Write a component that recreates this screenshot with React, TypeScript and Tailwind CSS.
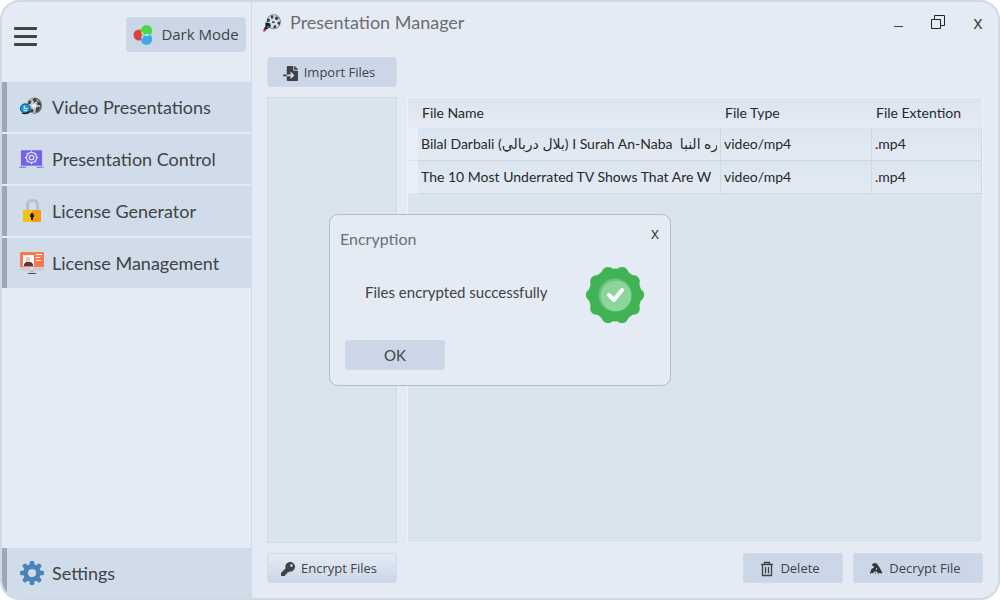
import type { ReactNode } from "react";
import { FaFileImport, FaKey } from "react-icons/fa";

function RgbIcon() {
  return (
    <svg width="20" height="20" viewBox="0 0 20 20" aria-hidden="true">
      <circle cx="6" cy="10" r="5.5" fill="#e04044" />
      <circle cx="13.500" cy="5.700" r="5.700" fill="#4cd845" />
      <circle cx="13.500" cy="14.300" r="5.700" fill="#3fa9e0" />
      <path d="M8.500 6.500a5.500 5.500 0 0 1 2.500 3.500l-2 .6z" fill="#f6e36a" />
      <path d="M10.500 10q3.300-2.300 6.500 0q-3 2.300-6.500 0z" fill="#8ff2f5" />
      <path d="M8.500 10.500l2.500.200-2 3.300q-1-1.500-.5-3.500z" fill="#e9c8f0" />
    </svg>
  );
}

function ReelIcon({ size, badge }: { size: number; badge?: boolean }) {
  return (
    <svg width={size} height={size} viewBox="0 0 24 24" aria-hidden="true">
      {badge ? (
        <>
          <ellipse cx="15" cy="10" rx="8" ry="8.500" fill="#6c6a68" />
          <ellipse cx="14" cy="10" rx="7" ry="7.700" fill="#c5c4c3" />
          <path d="M13 3l3-1 2 3-3 2zM18 5l3 2 1 3-4-1zM17 12l4-1-2 5-3 1zM11 13l3 1 0 3-3 0zM9 5l3 0-1 3-3 1z" fill="#3a3e46" />
          <path d="M12 9l4-1 1 3-3 2z" fill="#eeeeef" />
          <ellipse cx="5.500" cy="13" rx="5" ry="4.800" fill="#1c9ad6" stroke="#0b4268" />
          <path d="M3.500 14.500q2 1.500 4 0M4.500 10v3h3.500" fill="none" stroke="#c8f3ff" strokeWidth="1.200" />
          <path d="M2 18q5 1.500 9-2" fill="none" stroke="#111c28" strokeWidth="1.300" />
        </>
      ) : (
        <>
          <ellipse cx="13.500" cy="11" rx="9" ry="9.500" fill="#717782" />
          <ellipse cx="13.500" cy="11" rx="8" ry="8.500" fill="#dbe1e8" />
          <path d="M10 3h3v4h-3zM16 4l4 2-2 3-3-1zM19 11h3l-1 4-3-1zM14 15l3 1-1 3h-3zM12 10l3 1-1 2-3-1zM5 7l4 1-1 3-3 0z" fill="#343c49" />
          <path d="M3 12l6 1 1 4-4 3-4 2-1-2 2-3z" fill="#14253b" />
          <path d="M0 21l3-1 1 2-3 2z" fill="#bd3b42" />
          <path d="M5 18l3-1" stroke="#4aa5d8" strokeWidth="1.500" />
        </>
      )}
    </svg>
  );
}

function ControlIcon() {
  return (
    <svg width="26" height="24" viewBox="0 0 26 24" aria-hidden="true">
      <path d="M2 3h22v16H2zM0 20h8l-1 1H1zM18 20h8l-1 1h-6z" fill="#7562e8" />
      <g fill="none" stroke="#d8e2f8" strokeWidth="1.300">
        <circle cx="13" cy="10.500" r="5.300" />
        <circle cx="13" cy="10.500" r="2.300" />
        <path d="M13 3.500v2M13 15.500v2M6 10.500h2M18 10.500h2M8.200 5.700l1.300 1.300M16.500 14l1.300 1.300M17.800 5.700L16.500 7M9.500 14l-1.300 1.300" />
      </g>
    </svg>
  );
}

function LockIcon() {
  return (
    <svg width="24" height="24" viewBox="0 0 24 24" aria-hidden="true">
      <path d="M7.500 11V6.500q0-5 4.500-5h1q4.500 0 4.500 5V11" fill="none" stroke="#b8c1c5" strokeWidth="2.800" />
      <path d="M3 11h9v12H3z" fill="#f0c413" />
      <path d="M12 11h9v12h-9z" fill="#f59b16" />
      <path d="M11 14h2v1.500h1V18h-1v3h-2v-3h-1v-2.500h1z" fill="#211c14" />
    </svg>
  );
}

function LicenseIcon() {
  return (
    <svg width="24" height="24" viewBox="0 0 24 24" aria-hidden="true">
      <path d="M1 1h22q1 0 1 1v14H0V2q0-1 1-1z" fill="#f97850" />
      <path d="M0 16.500h24v2q0 1-1 1H1q-1 0-1-1z" fill="#c9cdce" />
      <path d="M10.500 19.500h3v2h-3z" fill="#aeb6ba" />
      <path d="M11 17.500h2v1h-2z" fill="#fff" />
      <path d="M8 22h8v1H8z" fill="#7c3f5b" />
      <path d="M3 4h11v11H3z" fill="#fff" />
      <path d="M6 6h4v5H6z" fill="#f8c8b8" />
      <path d="M4 15v-2l2-2h5l2 2v2z" fill="#513a46" />
      <path d="M16 3.500h6M16 6.500h4M16 9.500h5" stroke="#fff" />
    </svg>
  );
}

function GearIcon() {
  const teeth = [0, 45, 90, 135, 180, 225, 270, 315];
  return (
    <svg width="24" height="24" viewBox="0 0 24 24" fill="#4a82bb" aria-hidden="true">
      {teeth.map((angle) => (
        <rect key={angle} x="9.700" y="0" width="4.600" height="6" rx="1.500" transform={`rotate(${angle} 12 12)`} />
      ))}
      <circle cx="12" cy="12" r="6.500" fill="none" stroke="#4a82bb" strokeWidth="4.800" />
    </svg>
  );
}

function TrashIcon() {
  return (
    <svg width="14" height="16" viewBox="0 0 14 16" fill="none" stroke="#404346" strokeWidth="1.300" aria-hidden="true">
      <path d="M1 3.500h12M4.500 3V1.500h5V3M2.500 4v10.500h9V4M5.500 6v6.500M8.500 6v6.500" />
    </svg>
  );
}

function DecryptIcon() {
  return (
    <svg width="14" height="14" viewBox="0 0 14 14" aria-hidden="true">
      <path d="M3 3.500Q3 1 6 1q2.500 0 3 2.500l1 1 3.500 6.500h-5L8 9.500H5.500L4 11H1l1.500-4L5 5.500l-.5-1.500z" fill="#333639" />
      <path d="M7.500 6v1.700" stroke="#cbd7e7" />
      <path d="M1.500 11v1.500M4 11v1M6.500 10v2.500M9.500 11v2M12 11v1.500" stroke="#898f97" />
    </svg>
  );
}

function RestoreIcon() {
  return (
    <svg width="16" height="16" viewBox="0 0 16 16" fill="none" stroke="#222" aria-hidden="true">
      <path d="M4.500 5V1.500h10v10H11" />
      <path d="M1.500 5.500h9v9h-9z" />
    </svg>
  );
}

function SuccessBadge() {
  const lobes = [18, 54, 90, 126, 162, 198, 234, 270, 306, 342];
  return (
    <svg width="60" height="58" viewBox="0 0 60 58" role="img" aria-label="Success">
      <circle cx="30" cy="29" r="26.500" fill="#40b455" />
      {lobes.map((angle) => (
        <circle key={angle} cx="30" cy="6.300" r="6.500" fill="#40b455" transform={`rotate(${angle} 30 29)`} />
      ))}
      <circle cx="30" cy="29" r="16.500" fill="#73be81" />
      <circle cx="31" cy="30" r="15.300" fill="#8cd69b" />
      <path d="M24 29l5 5 8-10" fill="none" stroke="#fff" strokeWidth="4" strokeLinecap="round" strokeLinejoin="round" />
    </svg>
  );
}

function NavItem({ icon, label }: { icon: ReactNode; label: string }) {
  return (
    <button
      type="button"
      className="flex h-[50px] w-full items-center border-l-[5px] border-[#9aa8b9] bg-[#d0dce9] pl-3 text-left font-[Lato,sans-serif] text-lg text-[#404346]"
    >
      <span className="mr-2 flex w-[25px] justify-center">{icon}</span>
      {label}
    </button>
  );
}

function ActionButton({ icon, label, className }: { icon: ReactNode; label: string; className: string }) {
  return (
    <button
      type="button"
      className={`flex h-[30px] items-center justify-center gap-1.5 rounded-[3px] border border-[#d0d9e6] pt-0.5 pr-1.5 text-[13px] text-[#404346] ${className}`}
    >
      {icon}
      {label}
    </button>
  );
}

const navigation = [
  { label: "Video Presentations", icon: <ReelIcon size={23} badge /> },
  { label: "Presentation Control", icon: <ControlIcon /> },
  { label: "License Generator", icon: <LockIcon /> },
  { label: "License Management", icon: <LicenseIcon /> },
];

const files = [
  { name: "Bilal Darbali (بلال دربالي) I Surah An-Naba \u00a0سوره النبا", type: "video/mp4", extension: ".mp4" },
  { name: "The 10 Most Underrated TV Shows That Are W", type: "video/mp4", extension: ".mp4" },
];

function FileTable() {
  return (
    <div className="min-w-0 flex-1 border border-[#edf2fa] bg-[#dae4ef]">
      <table className="w-full table-fixed border-separate border-spacing-0 font-[Lato,'DejaVu_Sans',sans-serif] text-sm text-[#26292c]">
        <colgroup>
          <col className="w-[10px]" />
          <col />
          <col className="w-[151px]" />
          <col className="w-[110px]" />
        </colgroup>
        <thead>
          <tr className="h-[30px] bg-linear-to-b from-[#dae4ef] to-[#e5ebf5] text-left">
            <th className="p-0" />
            <th className="p-0 pl-1 font-normal">File Name</th>
            <th className="p-0 pl-1 font-normal">File Type</th>
            <th className="p-0 pl-1 font-normal">File Extention</th>
          </tr>
        </thead>
        <tbody>
          {files.map((file) => (
            <tr key={file.name} className="h-[33px] bg-linear-to-b from-[#dae4ef] to-[#e5ebf5]">
              <td className="border-b border-[#dfe6f0] bg-[#e9effa] p-0" />
              <td className="border-r border-b border-[#ced7e4] px-[3px] py-0">
                <div className="overflow-hidden whitespace-nowrap">{file.name}</div>
              </td>
              <td className="border-r border-b border-[#ced7e4] px-[3px] py-0">{file.type}</td>
              <td className="border-r border-b border-[#ced7e4] px-[3px] py-0">{file.extension}</td>
            </tr>
          ))}
        </tbody>
      </table>
    </div>
  );
}

function EncryptionDialog() {
  return (
    <div className="fixed inset-0 flex items-center justify-center">
      <section
        role="dialog"
        aria-labelledby="dialog-title"
        className="w-[342px] rounded-[9px] border border-[#afbdcd] bg-[#e5ebf5] pt-2 pr-[11px] pb-[15px] pl-[10px] font-[Lato,sans-serif] text-[#404346]"
      >
        <header className="flex h-[30px] items-start justify-between">
          <h2 id="dialog-title" className="pt-1 text-base text-[#6b6e72]">
            Encryption
          </h2>
          <button type="button" aria-label="Close dialog" className="font-['Open_Sans',sans-serif] text-base leading-5">
            x
          </button>
        </header>
        <div className="mt-[13px] flex items-center justify-between pr-[14px] pl-[25px]">
          <p className="pb-1.5 text-[15px]">Files encrypted successfully</p>
          <SuccessBadge />
        </div>
        <button
          type="button"
          className="mt-4 ml-[5px] flex h-[30px] w-[100px] items-center justify-center rounded-[3px] border border-[#d0d9e6] bg-[#cbd7e7] text-[15px]"
        >
          OK
        </button>
      </section>
    </div>
  );
}

export default function App() {
  return (
    <div className="min-h-screen bg-white font-['Open_Sans',sans-serif]">
      <div className="flex min-h-screen overflow-hidden rounded-[20px] border-2 border-[#d0d8e4] bg-[#e5ebf5]">
        <aside className="flex w-[250px] shrink-0 flex-col border-r border-[#d0d8e4]">
          <div className="flex h-20 items-start justify-between pt-[15px] pr-[5px] pl-3">
            <button type="button" aria-label="Menu" className="mt-2.5 flex w-[23px] flex-col gap-[5px]">
              <span className="h-[3px] w-full rounded-[1px] bg-[#404346]" />
              <span className="h-[3px] w-full rounded-[1px] bg-[#404346]" />
              <span className="h-[3px] w-full rounded-[1px] bg-[#404346]" />
            </button>
            <button
              type="button"
              className="flex h-[35px] w-[120px] items-center justify-center gap-2 rounded-[3px] border border-[#d0d9e6] bg-[#cbd7e7] text-[15px] text-[#404346]"
            >
              <RgbIcon />
              Dark Mode
            </button>
          </div>
          <nav className="flex flex-1 flex-col gap-0.5">
            {navigation.map((item) => (
              <NavItem key={item.label} {...item} />
            ))}
            <div className="mt-auto overflow-hidden rounded-bl-[18px]">
              <NavItem icon={<GearIcon />} label="Settings" />
            </div>
          </nav>
        </aside>
        <main className="flex min-w-0 flex-1 flex-col pr-[15px] pb-[15px] pl-[15px]">
          <header className="flex h-[55px] items-start justify-between">
            <div className="-ml-1 flex items-center gap-2 pt-1.5">
              <ReelIcon size={19} />
              <h1 className="font-[Lato,sans-serif] text-lg text-[#6b6e72]">Presentation Manager</h1>
            </div>
            <div className="flex items-center text-lg text-[#404346]">
              <button type="button" aria-label="Minimize" className="flex h-10 w-10 items-center justify-center pt-2">
                <span className="h-px w-[9px] bg-[#404346]" />
              </button>
              <button type="button" aria-label="Restore" className="flex h-10 w-10 items-center justify-center">
                <RestoreIcon />
              </button>
              <button type="button" aria-label="Close" className="-mr-[15px] flex h-10 w-10 items-center justify-center">
                x
              </button>
            </div>
          </header>
          <ActionButton icon={<FaFileImport size={15} />} label="Import Files" className="w-[130px] bg-[#cbd7e7]" />
          <div className="mt-2.5 mb-2.5 flex flex-1 gap-2.5">
            <div className="w-[130px] border border-[#d0d9e4] bg-[#dae4ef]" />
            <FileTable />
          </div>
          <div className="flex gap-2.5">
            <ActionButton
              icon={<FaKey size={14} />}
              label="Encrypt Files"
              className="mr-auto w-[130px] bg-linear-to-b from-[#e5ebf5] to-[#cbd7e7]"
            />
            <ActionButton icon={<TrashIcon />} label="Delete" className="w-[100px] bg-[#cbd7e7]" />
            <ActionButton icon={<DecryptIcon />} label="Decrypt File" className="w-[130px] bg-[#cbd7e7]" />
          </div>
        </main>
      </div>
      <EncryptionDialog />
    </div>
  );
}
